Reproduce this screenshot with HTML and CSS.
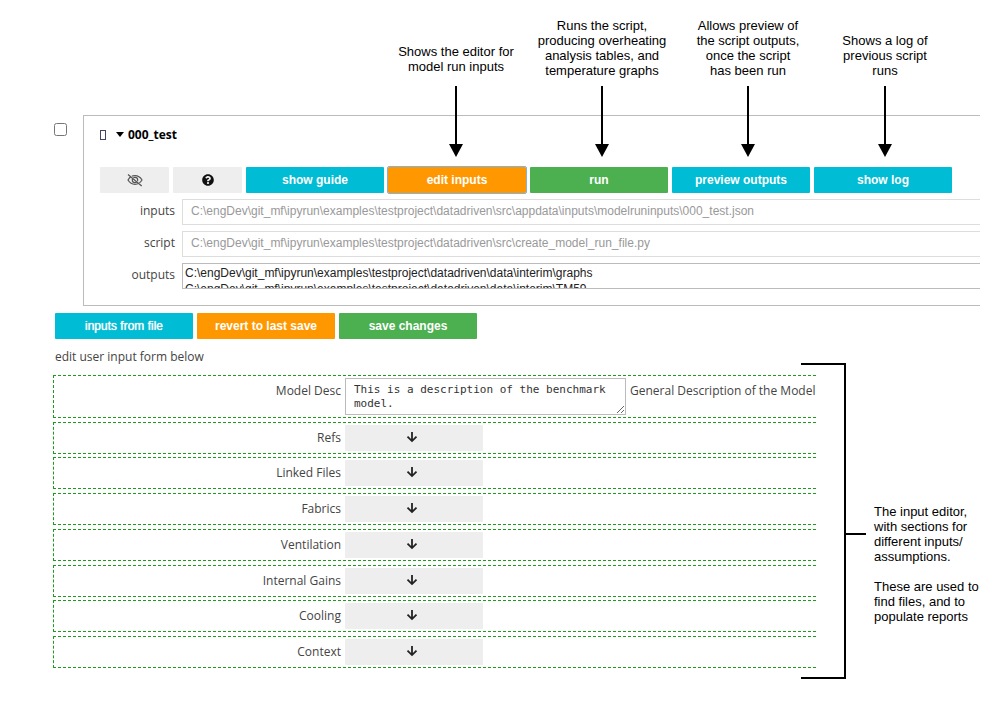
FILE: index.html
```html
<!DOCTYPE html>
<html lang="en">
<head>
<meta charset="utf-8">
<title>Model run editor</title>
<link rel="stylesheet" href="styles.css">
</head>
<body>
<svg class="defs" aria-hidden="true">
  <symbol id="arrow" viewBox="0 0 14 71"><path d="M6 0h2v58H6z"/><path d="M0 58h14L7 71z"/></symbol>
  <symbol id="down" viewBox="0 0 12 12"><path d="M6 1v9M1.500 5.600L6 10.100l4.500-4.500" fill="none" stroke="#222" stroke-width="1.800"/></symbol>
</svg>
<header class="callouts">
  <p class="callout callout-raised">Shows the editor for<br>model run inputs<svg class="arrow" aria-hidden="true"><use href="#arrow"/></svg></p>
  <p class="callout">Runs the script,<br>producing overheating<br>analysis tables, and<br>temperature graphs<svg class="arrow" aria-hidden="true"><use href="#arrow"/></svg></p>
  <p class="callout">Allows preview of<br>the script outputs,<br>once the script<br>has been run<svg class="arrow" aria-hidden="true"><use href="#arrow"/></svg></p>
  <p class="callout">Shows a log of<br>previous script<br>runs<svg class="arrow" aria-hidden="true"><use href="#arrow"/></svg></p>
</header>

<main class="app">
  <div class="run">
    <input class="run-check" type="checkbox" aria-label="Select 000_test">
    <section class="panel">
      <button class="title" type="button"><span class="box"></span><svg class="caret" viewBox="0 0 8 5" aria-hidden="true"><path d="M0 0h8L4 5z"/></svg>000_test</button>
      <div class="toolbar">
        <button class="btn btn-icon" type="button" aria-label="Hide">
          <svg width="16" height="14" viewBox="0 0 16 14" fill="none" stroke="#555" stroke-width="1.200" aria-hidden="true"><path d="M1 7c1.700-2.800 4.100-4.300 7-4.300S13.300 4.200 15 7c-1.700 2.800-4.100 4.300-7 4.300S2.700 9.800 1 7z"/><circle cx="8" cy="7" r="2.700"/><path d="M1.800 1.500L15 13" stroke="#eee" stroke-width="1.500"/><path d="M1 1.500L14.700 13"/></svg>
        </button>
        <button class="btn btn-icon" type="button" aria-label="Help">
          <svg width="12" height="12" viewBox="0 0 512 512" fill="#111" aria-hidden="true"><path d="M504 256c0 136.997-111.043 248-248 248S8 392.997 8 256C8 119.083 119.043 8 256 8s248 111.083 248 248zM262.655 90c-54.497 0-89.255 22.957-116.549 63.758-3.536 5.286-2.353 12.415 2.715 16.258l34.699 26.310c5.205 3.947 12.621 3.008 16.665-2.122 17.864-22.658 30.113-35.797 57.303-35.797 20.429 0 45.698 13.148 45.698 32.958 0 14.976-12.363 22.667-32.534 33.976C247.128 238.528 216 254.941 216 296v4c0 6.627 5.373 12 12 12h56c6.627 0 12-5.373 12-12v-1.333c0-28.462 83.186-29.647 83.186-106.667 0-58.002-60.165-102-116.531-102zM256 338c-25.365 0-46 20.635-46 46 0 25.364 20.635 46 46 46s46-20.636 46-46c0-25.365-20.635-46-46-46z"/></svg>
        </button>
        <button class="btn btn-info" type="button">show guide</button>
        <button class="btn btn-warning btn-active" type="button">edit inputs</button>
        <button class="btn btn-success" type="button">run</button>
        <button class="btn btn-info" type="button">preview outputs</button>
        <button class="btn btn-info" type="button">show log</button>
      </div>
      <div class="field">
        <label for="inputs">inputs</label>
        <input id="inputs" type="text" disabled value="C:\engDev\git_mf\ipyrun\examples\testproject\datadriven\src\appdata\inputs\modelruninputs\000_test.json">
      </div>
      <div class="field">
        <label for="script">script</label>
        <input id="script" type="text" disabled value="C:\engDev\git_mf\ipyrun\examples\testproject\datadriven\src\create_model_run_file.py">
      </div>
      <div class="field">
        <label for="outputs">outputs</label>
        <select id="outputs" multiple size="2">
          <option>C:\engDev\git_mf\ipyrun\examples\testproject\datadriven\data\interim\graphs</option>
          <option>C:\engDev\git_mf\ipyrun\examples\testproject\datadriven\data\interim\TM59</option>
        </select>
      </div>
    </section>
  </div>

  <div class="actions">
    <button class="btn btn-info btn-regular" type="button">inputs from file</button>
    <button class="btn btn-warning" type="button">revert to last save</button>
    <button class="btn btn-success" type="button">save changes</button>
  </div>
  <p class="hint">edit user input form below</p>

  <div class="editor">
    <form class="form">
      <div class="row">
        <label for="desc">Model Desc</label>
        <textarea id="desc">This is a description of the benchmark model.</textarea>
        <span class="help">General Description of the Model</span>
      </div>
      <div class="row"><label for="refs">Refs</label><button class="btn expand" id="refs" type="button"><svg class="down" aria-hidden="true"><use href="#down"/></svg></button></div>
      <div class="row"><label for="linked">Linked Files</label><button class="btn expand" id="linked" type="button"><svg class="down" aria-hidden="true"><use href="#down"/></svg></button></div>
      <div class="row"><label for="fabrics">Fabrics</label><button class="btn expand" id="fabrics" type="button"><svg class="down" aria-hidden="true"><use href="#down"/></svg></button></div>
      <div class="row"><label for="vent">Ventilation</label><button class="btn expand" id="vent" type="button"><svg class="down" aria-hidden="true"><use href="#down"/></svg></button></div>
      <div class="row"><label for="gains">Internal Gains</label><button class="btn expand" id="gains" type="button"><svg class="down" aria-hidden="true"><use href="#down"/></svg></button></div>
      <div class="row"><label for="cooling">Cooling</label><button class="btn expand" id="cooling" type="button"><svg class="down" aria-hidden="true"><use href="#down"/></svg></button></div>
      <div class="row"><label for="context">Context</label><button class="btn expand" id="context" type="button"><svg class="down" aria-hidden="true"><use href="#down"/></svg></button></div>
    </form>
    <div class="bracket"></div>
    <aside class="note">
      <p>The input editor,<br>with sections for<br>different inputs/<br>assumptions.</p>
      <p>These are used to<br>find files, and to<br>populate reports</p>
    </aside>
  </div>
</main>
</body>
</html>
```
FILE: styles.css
```css
* { box-sizing: border-box; }

body {
  margin: 0;
  padding-right: 20px;
  background: #fff;
  color: #444;
  font: 12px/16px "Open Sans", "Noto Sans", sans-serif;
}

p { margin: 0; }
.defs { display: none; }

/* Callouts above the panel */
.callouts {
  display: grid;
  grid-template-columns: 146px 146px 146px 128px;
  align-items: end;
  height: 86px;
  margin-bottom: 29px;
  padding-left: 383px;
}
.callout {
  position: relative;
  padding-bottom: 8px;
  color: #000;
  font: 13px/15px "Liberation Sans", Arial, sans-serif;
  text-align: center;
  white-space: nowrap;
}
.callout-raised { padding-bottom: 12px; }
.arrow {
  position: absolute;
  top: 100%;
  left: 50%;
  width: 14px;
  height: 71px;
  margin-left: -7px;
}

/* Run panel */
.run {
  display: flex;
  align-items: flex-start;
  padding-left: 54px;
}
.run-check {
  flex: none;
  width: 13px;
  height: 13px;
  margin: 8px 16px 0 0;
}
.panel {
  flex: 1;
  min-width: 0;
  padding: 10px 0 16px 16px;
  border: 1px solid #bbb;
  border-right: 0;
}
.title {
  display: flex;
  align-items: center;
  height: 17px;
  margin-bottom: 24px;
  padding: 0;
  border: 0;
  background: none;
  color: #000;
  font: bold 12px/16px "Open Sans", "Noto Sans", sans-serif;
}
.box {
  width: 6px;
  height: 10px;
  margin-right: 10px;
  border: 1px solid #446;
}
.caret {
  width: 8px;
  height: 5px;
  margin-right: 4px;
}
.toolbar, .actions {
  display: flex;
  gap: 4px;
}
.btn {
  display: flex;
  flex: none;
  align-items: center;
  justify-content: center;
  width: 138px;
  height: 26px;
  padding: 0;
  border: 0;
  border-radius: 1px;
  background: #eee;
  color: #fff;
  font: bold 12px/16px "Liberation Sans", Arial, sans-serif;
}
.btn-icon { width: 69px; }
.btn-info { background: #00bcd4; }
.btn-warning { background: #ff9800; }
.btn-success { background: #4caf50; }
.btn-active { outline: 1px solid #7db4e6; }
.btn-regular {
  font-weight: normal;
  text-shadow: 0 0 1px #fff;
}

.toolbar { margin-bottom: 6px; }
.field {
  display: flex;
  align-items: center;
  gap: 7px;
}
.field + .field { margin-top: 6px; }
.field label {
  width: 75px;
  padding-bottom: 2px;
  text-align: right;
}
.field input, .field select {
  flex: 1;
  min-width: 0;
  height: 26px;
  margin: 0;
  border: 1px solid #ddd;
  border-right: 0;
  border-radius: 0;
  background: #fff;
  font: 12px/16px "Liberation Sans", Arial, sans-serif;
}
.field input {
  padding: 0 8px 2px;
  color: #999;
}
.field select {
  padding: 2px 0;
  border-color: #bbb;
  color: #222;
  overflow: hidden;
}
.field option {
  min-height: 16px;
  padding: 0 2px;
}

/* Form actions */
.actions { padding: 7px 0 10px 55px; }
.hint {
  height: 14px;
  padding-left: 55px;
}

/* Input editor */
.editor {
  display: flex;
  min-height: 316px;
  padding-left: 53px;
}
.form {
  display: flex;
  flex: 1;
  flex-direction: column;
  justify-content: space-between;
  padding: 12px 0 11px;
}
.row {
  display: flex;
  align-items: flex-start;
  gap: 4px;
  padding: 2px 0;
  border: 1px dashed #1c9c1c;
  border-right: 0;
}
.row label {
  width: 287px;
  padding-top: 5px;
  text-align: right;
}
.row textarea {
  width: 281px;
  height: 37px;
  padding: 4px 8px;
  border: 1px solid #bbb;
  color: #333;
  font: 11px/14px "DejaVu Sans Mono", monospace;
  overflow: hidden;
}
.help {
  padding-top: 5px;
  white-space: nowrap;
}
.expand { padding: 0 4px 2px 0; }
.down {
  width: 12px;
  height: 12px;
}
.bracket {
  position: relative;
  width: 45px;
  margin-left: -15px;
  border: 2px solid #000;
  border-left: 0;
}
.bracket::after {
  position: absolute;
  top: 54%;
  left: 100%;
  width: 22px;
  height: 2px;
  background: #000;
  content: "";
}
.note {
  display: grid;
  gap: 15px;
  align-content: start;
  width: 106px;
  margin-left: 28px;
  padding-top: 141px;
  color: #000;
  font: 13px/15px "Liberation Sans", Arial, sans-serif;
  white-space: nowrap;
}
```
